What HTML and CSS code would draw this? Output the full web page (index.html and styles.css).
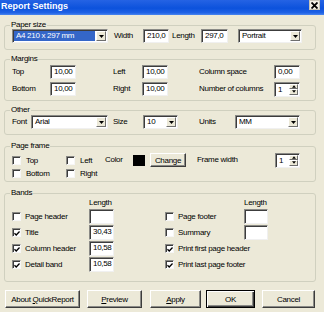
FILE: index.html
```html
<!DOCTYPE html>
<html>
<head>
<meta charset="utf-8">
<link rel="stylesheet" href="styles.css">
</head>
<body>
<div class="window">
  <div class="titlebar">
    <span class="title">Report Settings</span>
    <span class="close"><svg width="7" height="7" viewBox="0 0 7 7"><path d="M0.5 0.5L6.5 6.5M6.5 0.5L0.5 6.5" stroke="#000" stroke-width="1.8"/></svg></span>
  </div>
  <div class="main">
    <fieldset class="group g-paper">
      <legend>Paper size</legend>
      <div class="row">
        <div class="combo w-paper"><span class="val sel">A4 210 x 297 mm</span><span class="drop"><svg width="5" height="3" viewBox="0 0 5 3"><path d="M0 0H5L2.5 3Z"/></svg></span></div>
        <span class="lbl l-width">Width</span>
        <span class="field w-pw">210,0</span>
        <span class="lbl l-length">Length</span>
        <span class="field w-pl">297,0</span>
        <div class="combo w-orient"><span class="val">Portrait</span><span class="drop"><svg width="5" height="3" viewBox="0 0 5 3"><path d="M0 0H5L2.5 3Z"/></svg></span></div>
      </div>
    </fieldset>

    <fieldset class="group g-margins">
      <legend>Margins</legend>
      <div class="margins-grid">
        <span class="lbl">Top</span>
        <span class="field">10,00</span>
        <span></span>
        <span class="lbl">Left</span>
        <span class="field">10,00</span>
        <span></span>
        <span class="lbl">Column space</span>
        <span class="field">0,00</span>

        <span class="lbl">Bottom</span>
        <span class="field">10,00</span>
        <span></span>
        <span class="lbl">Right</span>
        <span class="field">10,00</span>
        <span></span>
        <span class="lbl">Number of columns</span>
        <div class="spin"><span class="val">1</span><span class="arrows"><span class="arr"><svg width="5" height="3" viewBox="0 0 5 3"><path d="M0 3H5L2.5 0Z"/></svg></span><span class="arr"><svg width="5" height="3" viewBox="0 0 5 3"><path d="M0 0H5L2.5 3Z"/></svg></span></span></div>
      </div>
    </fieldset>

    <fieldset class="group g-other">
      <legend>Other</legend>
      <div class="row">
        <span class="lbl l-font">Font</span>
        <div class="combo w-font"><span class="val">Arial</span><span class="drop"><svg width="5" height="3" viewBox="0 0 5 3"><path d="M0 0H5L2.5 3Z"/></svg></span></div>
        <span class="lbl l-size">Size</span>
        <div class="combo w-size"><span class="val">10</span><span class="drop"><svg width="5" height="3" viewBox="0 0 5 3"><path d="M0 0H5L2.5 3Z"/></svg></span></div>
        <span class="lbl l-units">Units</span>
        <div class="combo w-units"><span class="val">MM</span><span class="drop"><svg width="5" height="3" viewBox="0 0 5 3"><path d="M0 0H5L2.5 3Z"/></svg></span></div>
      </div>
    </fieldset>

    <fieldset class="group g-frame">
      <legend>Page frame</legend>
      <div class="frame-grid">
        <label class="check gap5"><span class="cb"></span><span>Top</span></label>
        <label class="check gap5"><span class="cb"></span><span>Left</span></label>
        <span class="lbl">Color</span>
        <span class="swatch"></span>
        <span></span>
        <span class="btn small">Change</span>
        <span></span>
        <span class="lbl">Frame width</span>
        <div class="spin"><span class="val">1</span><span class="arrows"><span class="arr"><svg width="5" height="3" viewBox="0 0 5 3"><path d="M0 3H5L2.5 0Z"/></svg></span><span class="arr"><svg width="5" height="3" viewBox="0 0 5 3"><path d="M0 0H5L2.5 3Z"/></svg></span></span></div>

        <label class="check gap5"><span class="cb"></span><span>Bottom</span></label>
        <label class="check gap5"><span class="cb"></span><span>Right</span></label>
      </div>
    </fieldset>

    <fieldset class="group g-bands">
      <legend>Bands</legend>
      <div class="bands-grid">
        <span></span>
        <span class="lbl hdr">Length</span>
        <span></span>
        <span></span>
        <span class="lbl hdr">Length</span>

        <label class="check"><span class="cb"></span><span>Page header</span></label>
        <span class="field"></span>
        <span></span>
        <label class="check"><span class="cb"></span><span>Page footer</span></label>
        <span class="field"></span>

        <label class="check"><span class="cb on"><svg width="7" height="7" viewBox="0 0 7 7"><path d="M0.5 3.2L2.6 5.3L6.5 1.2" fill="none" stroke="#000" stroke-width="1.6"/></svg></span><span>Title</span></label>
        <span class="field">30,43</span>
        <span></span>
        <label class="check"><span class="cb"></span><span>Summary</span></label>
        <span class="field"></span>

        <label class="check"><span class="cb on"><svg width="7" height="7" viewBox="0 0 7 7"><path d="M0.5 3.2L2.6 5.3L6.5 1.2" fill="none" stroke="#000" stroke-width="1.6"/></svg></span><span>Column header</span></label>
        <span class="field">10,58</span>
        <span></span>
        <label class="check"><span class="cb on"><svg width="7" height="7" viewBox="0 0 7 7"><path d="M0.5 3.2L2.6 5.3L6.5 1.2" fill="none" stroke="#000" stroke-width="1.6"/></svg></span><span>Print first page header</span></label>
        <span></span>

        <label class="check"><span class="cb on"><svg width="7" height="7" viewBox="0 0 7 7"><path d="M0.5 3.2L2.6 5.3L6.5 1.2" fill="none" stroke="#000" stroke-width="1.6"/></svg></span><span>Detail band</span></label>
        <span class="field">10,58</span>
        <span></span>
        <label class="check"><span class="cb on"><svg width="7" height="7" viewBox="0 0 7 7"><path d="M0.5 3.2L2.6 5.3L6.5 1.2" fill="none" stroke="#000" stroke-width="1.6"/></svg></span><span>Print last page footer</span></label>
        <span></span>
      </div>
    </fieldset>

    <div class="buttons">
      <span class="btn b-about"><span>About <u>Q</u>uickReport</span></span>
      <span class="btn b-preview"><span><u>P</u>review</span></span>
      <span class="btn b-apply"><span><u>A</u>pply</span></span>
      <span class="btn b-ok default">OK</span>
      <span class="btn b-cancel">Cancel</span>
    </div>
  </div>
</div>
</body>
</html>
```

FILE: styles.css
```css
* { box-sizing: border-box; }

body {
  margin: 0;
  background: #ece9d8;
  font-family: "Liberation Sans", Arial, sans-serif;
  font-size: 8px;
  letter-spacing: -0.3px;
  color: #000;
}

.window {
  width: 324px;
  height: 312px;
  display: flex;
  flex-direction: column;
  overflow: hidden;
}

.titlebar {
  height: 15px;
  flex: none;
  display: flex;
  justify-content: space-between;
  align-items: flex-start;
  padding: 0 4px 0 1px;
  background: linear-gradient(#2563e4, #0c52dc 55%, #1f62e6 85%, #4a86ee);
}

.title {
  color: #fff;
  font-weight: bold;
  font-size: 9px;
  line-height: 13px;
  letter-spacing: 0;
}

.close {
  width: 11px;
  height: 10px;
  background: #f2efe4;
  border: 1px solid #c9c5b5;
  display: flex;
  align-items: center;
  justify-content: center;
}

.main {
  padding: 5px 8px 0 4px;
  display: flex;
  flex-direction: column;
}

.group {
  margin: 4px 0 0;
  padding: 0 0 6px 7px;
  border: 1px solid #d0d0bf;
  border-radius: 3px;
  min-width: 0;
}

.group legend {
  padding: 0 1px;
  margin-left: -2px;
  line-height: 10px;
  height: 10px;
}

.g-paper { margin-top: 0; padding-bottom: 6px; }
.g-margins { padding-bottom: 4px; }
.g-other { padding-bottom: 5px; }
.g-frame { margin-top: 6px; padding-bottom: 1px; }
.g-bands { margin-top: 6px; padding-bottom: 9px; }

.row {
  display: flex;
  align-items: center;
  height: 14px;
}

.g-paper .row { margin-top: -1px; }

.lbl { white-space: nowrap; line-height: 10px; }

.field {
  display: block;
  height: 14px;
  background: #fff;
  border: 1px solid;
  border-color: #8a8a86 #f0f0f0 #f0f0f0 #8a8a86;
  box-shadow: inset 1px 1px 0 #3c3c3c;
  padding: 0 0 0 3px;
  line-height: 12px;
  white-space: nowrap;
}

.combo {
  display: flex;
  height: 14px;
  background: #fff;
  border: 1px solid;
  border-color: #8a8a86 #f0f0f0 #f0f0f0 #8a8a86;
  box-shadow: inset 1px 1px 0 #3c3c3c;
  padding: 1px;
}

.combo .val {
  flex: 1;
  padding-left: 2px;
  line-height: 10px;
  white-space: nowrap;
  overflow: hidden;
}

.combo .val.sel {
  background: #3466c8;
  color: #fff;
  margin-right: 1px;
}

.drop {
  width: 10px;
  height: 10px;
  flex: none;
  background: #ece9d8;
  border: 1px solid;
  border-color: #fff #6e6e6e #6e6e6e #fff;
  display: flex;
  align-items: center;
  justify-content: center;
}

.spin {
  display: flex;
  height: 15px;
  background: #fff;
  border: 1px solid;
  border-color: #8a8a86 #f0f0f0 #f0f0f0 #8a8a86;
  box-shadow: inset 1px 1px 0 #3c3c3c;
  padding: 1px;
}

.spin .val { flex: 1; padding-left: 2px; line-height: 11px; }

.arrows {
  width: 9px;
  display: flex;
  flex-direction: column;
}

.arr {
  flex: 1;
  background: #ece9d8;
  border: 1px solid;
  border-color: #fff #6e6e6e #6e6e6e #fff;
  display: flex;
  align-items: center;
  justify-content: center;
}

.arr svg { width: 4px; height: 3px; }

/* Paper size widths */
.w-paper { width: 96px; }
.l-width { margin-left: 6px; width: 29px; }
.w-pw { width: 26px; }
.l-length { margin-left: 3px; width: 29px; }
.w-pl { width: 27px; }
.w-orient { width: 64px; margin-left: 10px; }

/* Margins */
.margins-grid {
  display: grid;
  grid-template-columns: 38px 26px 37px 29px 26px 31px 75px 26px;
  grid-template-rows: 14px 14px;
  row-gap: 3px;
  align-items: center;
  margin-top: 1px;
}

/* Other */
.l-font { width: 19px; }
.w-font { width: 77px; }
.l-size { margin-left: 5px; width: 30px; }
.w-size { width: 35px; }
.l-units { margin-left: 21px; width: 36px; }
.w-units { width: 65px; }

/* Checkboxes */
.check {
  display: flex;
  align-items: center;
  gap: 4px;
  white-space: nowrap;
}

.check.gap5 { gap: 5px; }

.cb {
  width: 9px;
  height: 9px;
  flex: none;
  background: #fff;
  border: 1px solid;
  border-color: #8a8a86 #f6f6f6 #f6f6f6 #8a8a86;
  box-shadow: inset 1px 1px 0 #3c3c3c;
  display: flex;
  align-items: center;
  justify-content: center;
}

.cb svg { margin: 1px 0 0 1px; }

/* Page frame */
.frame-grid {
  display: grid;
  grid-template-columns: 54px 39px 28px 12px 5px 36px 11px 78px 25px;
  grid-template-rows: 14px 13px;
  align-items: center;
  margin-top: 2px;
}

.swatch {
  width: 12px;
  height: 11px;
  background: #000;
}

.btn {
  display: flex;
  align-items: center;
  justify-content: center;
  height: 18px;
  background: #ece9d8;
  border: 1px solid;
  border-color: #fff #3c3c3c #3c3c3c #fff;
  box-shadow: inset -1px -1px 0 #8a8a86;
  white-space: nowrap;
}

.btn.small { height: 14px; }

.btn.default {
  border-color: #000;
  box-shadow: inset 1px 1px 0 #fff, inset -1px -1px 0 #3c3c3c, inset -2px -2px 0 #8a8a86;
}

/* Bands */
.bands-grid {
  display: grid;
  grid-template-columns: 77px 25px 51px 79px 24px;
  grid-template-rows: 10px 15px 15px 15px 15px;
  row-gap: 1px;
  align-items: center;
}

.bands-grid .field { height: 15px; }

.hdr { align-self: end; }

/* Buttons */
.buttons {
  display: flex;
  margin-top: 8px;
  height: 18px;
}

.b-about { width: 75px; margin-left: 1px; }
.b-preview { width: 55px; margin-left: 7px; }
.b-apply { width: 51px; margin-left: 8px; }
.b-ok { width: 49px; margin-left: 5px; }
.b-cancel { width: 53px; margin-left: 7px; }
```
